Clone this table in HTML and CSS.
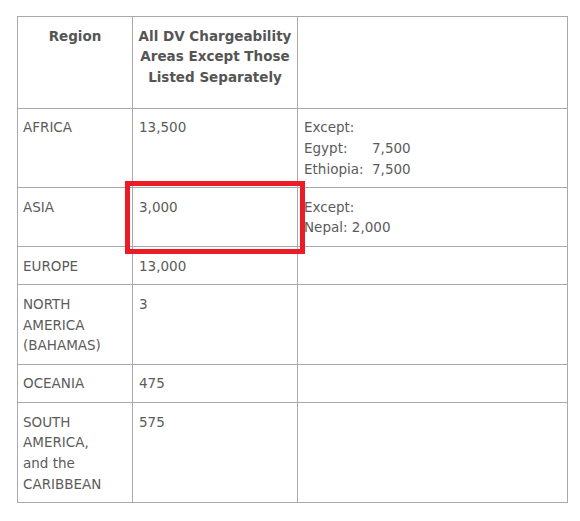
FILE: index.html
```html
<!DOCTYPE html>
<html>
<head>
<meta charset="utf-8">
<link rel="stylesheet" href="styles.css">
</head>
<body>
<div class="wrap">
  <table class="dv">
    <colgroup>
      <col class="c1">
      <col class="c2">
      <col class="c3">
    </colgroup>
    <tr class="head">
      <th>Region</th>
      <th>All DV Chargeability Areas Except Those Listed Separately</th>
      <th></th>
    </tr>
    <tr>
      <td>AFRICA</td>
      <td>13,500</td>
      <td>Except:<br><span class="lbl">Egypt:</span>7,500<br><span class="lbl">Ethiopia:</span>7,500</td>
    </tr>
    <tr>
      <td>ASIA</td>
      <td>3,000</td>
      <td>Except:<br>Nepal: 2,000</td>
    </tr>
    <tr>
      <td>EUROPE</td>
      <td>13,000</td>
      <td></td>
    </tr>
    <tr>
      <td>NORTH AMERICA (BAHAMAS)</td>
      <td>3</td>
      <td></td>
    </tr>
    <tr>
      <td>OCEANIA</td>
      <td>475</td>
      <td></td>
    </tr>
    <tr>
      <td>SOUTH AMERICA,<br>and the CARIBBEAN</td>
      <td>575</td>
      <td></td>
    </tr>
  </table>
  <div class="mark"></div>
</div>
</body>
</html>
```

FILE: styles.css
```css
html, body {
  margin: 0;
  padding: 0;
  background: #fff;
}
body {
  font-family: "DejaVu Sans", Verdana, sans-serif;
  font-size: 13.5px;
  color: #5b5b5b;
}
.wrap {
  position: relative;
  padding: 16px 0 0 17px;
}
.dv {
  border-collapse: separate;
  border-spacing: 0;
  table-layout: fixed;
  width: 550px;
  border-top: 1px solid #a9a9a9;
  border-left: 1px solid #a9a9a9;
}
.c1 { width: 115px; }
.c2 { width: 165px; }
.c3 { width: 270px; }
.dv th, .dv td {
  border-right: 1px solid #a9a9a9;
  border-bottom: 1px solid #a9a9a9;
  vertical-align: top;
  text-align: left;
  line-height: 20.7px;
  padding: 8.5px 5px 8px 5px;
}
.dv td:nth-child(n+2) {
  padding-left: 6px;
}
.dv th {
  font-weight: bold;
  text-align: center;
  color: #555;
  padding-left: 3px;
  padding-right: 3px;
  padding-bottom: 20px;
}
.lbl {
  display: inline-block;
  width: 68px;
}
.mark {
  position: absolute;
  left: 125px;
  top: 181px;
  width: 170px;
  height: 63px;
  border: 5px solid #ec1c24;
}
```
